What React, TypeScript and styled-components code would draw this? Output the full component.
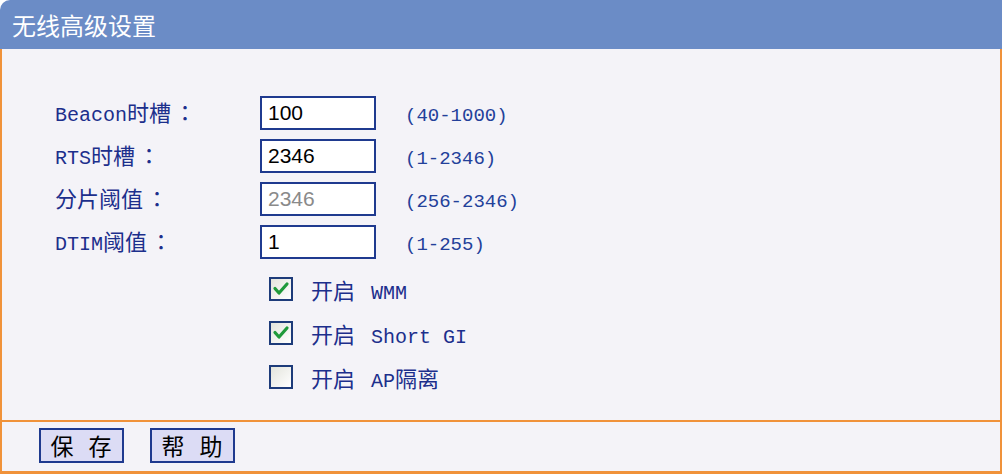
import { Fragment } from "react";
import styled, { createGlobalStyle } from "styled-components";

const GlobalStyle = createGlobalStyle`
  html, body {
    margin: 0;
    padding: 0;
    background: #ffffff;
  }
`;

const Page = styled.div`
  width: 1002px;
  height: 474px;
  display: flex;
  flex-direction: column;
  font-family: "Liberation Mono", "Noto Sans CJK SC", monospace;
`;

const Header = styled.div`
  height: 49px;
  background: #6b8cc6;
  border-top-left-radius: 10px;
  display: flex;
  align-items: center;
  padding-left: 12px;
  color: #ffffff;
  font-family: "Noto Sans CJK SC", sans-serif;
  font-size: 24px;
`;

const Content = styled.div`
  height: 371px;
  box-sizing: border-box;
  background: #f4f3f8;
  border-left: 2px solid #f0923a;
  border-right: 2px solid #f0923a;
  padding: 47px 0 0 53px;
  display: flex;
  flex-direction: column;
`;

const FieldGrid = styled.div`
  display: grid;
  grid-template-columns: 205px 145px auto;
  grid-auto-rows: 34px;
  row-gap: 9px;
  align-items: center;
`;

const Label = styled.div`
  color: #1c2f8c;
  font-size: 20px;
  line-height: 1;
  white-space: nowrap;
`;

const Cjk = styled.span`
  font-family: "Noto Sans CJK SC", sans-serif;
  font-size: 22px;
`;

const Colon = styled.span`
  font-family: "Noto Sans CJK TC", sans-serif;
  font-size: 22px;
  margin-left: 3px;
`;

const Input = styled.div<{ $disabled?: boolean }>`
  width: 116px;
  height: 34px;
  box-sizing: border-box;
  border: 2px solid #1f3a8f;
  background: #ffffff;
  color: ${(p) => (p.$disabled ? "#8a8a8a" : "#000000")};
  font-family: "Liberation Sans", Arial, sans-serif;
  font-size: 21px;
  display: flex;
  align-items: center;
  padding-left: 6px;
`;

const Range = styled.div`
  color: #23409a;
  font-size: 19px;
  padding-top: 6px;
`;

const Options = styled.div`
  margin-top: 8px;
  margin-left: 214px;
  display: flex;
  flex-direction: column;
`;

const OptionRow = styled.div`
  height: 44px;
  display: flex;
  align-items: center;
  gap: 18px;
  color: #1c2f8c;
  font-size: 20px;
  white-space: pre;

  & > span > ${Cjk}:first-child {
    margin-right: 4px;
  }
`;

const Box = styled.div`
  width: 24px;
  height: 24px;
  box-sizing: border-box;
  border: 2px solid #1d3b7a;
  background: linear-gradient(135deg, #e3e4dc, #ffffff);
  display: flex;
  align-items: center;
  justify-content: center;
`;

const Footer = styled.div`
  height: 54px;
  box-sizing: border-box;
  background: #f4f3f8;
  border: 2px solid #f0923a;
  border-bottom-width: 3px;
  padding: 6px 0 0 37px;
  display: flex;
  gap: 26px;
  align-items: flex-start;
`;

const Button = styled.button`
  width: 85px;
  height: 35px;
  box-sizing: border-box;
  border: 2px solid #1f3a8f;
  background: #dcdcf5;
  color: #000000;
  font-family: "Noto Sans CJK SC", sans-serif;
  font-size: 23px;
  line-height: 1;
  padding: 0 0 0 4px;
  letter-spacing: 5px;
  white-space: pre;
`;

const cjkPart = /([\u4e00-\u9fff]+|\uff1a)/;

function Mixed({ text }: { text: string }) {
  const parts = text.split(cjkPart).filter(Boolean);
  return (
    <>
      {parts.map((p, i) => {
        if (p === "\uff1a") return <Colon key={i}>{p}</Colon>;
        if (/[\u4e00-\u9fff]/.test(p)) return <Cjk key={i}>{p}</Cjk>;
        return <Fragment key={i}>{p}</Fragment>;
      })}
    </>
  );
}

function Checkbox({ checked }: { checked: boolean }) {
  return (
    <Box>
      {checked && (
        <svg width="18" height="18" viewBox="0 0 18 18">
          <path
            d="M3 8.5 L7 13 L15 4"
            fill="none"
            stroke="#1f9a3a"
            strokeWidth="3.2"
            strokeLinecap="round"
            strokeLinejoin="round"
          />
        </svg>
      )}
    </Box>
  );
}

const fields = [
  { label: "Beacon时槽：", value: "100", range: "(40-1000)" },
  { label: "RTS时槽：", value: "2346", range: "(1-2346)" },
  { label: "分片阈值：", value: "2346", range: "(256-2346)", disabled: true },
  { label: "DTIM阈值：", value: "1", range: "(1-255)" },
];

const options = [
  { text: "开启 WMM", checked: true },
  { text: "开启 Short GI", checked: true },
  { text: "开启 AP隔离", checked: false },
];

export default function App() {
  return (
    <Page>
      <GlobalStyle />
      <Header>无线高级设置</Header>
      <Content>
        <FieldGrid>
          {fields.map((f) => (
            <Fragment key={f.label}>
              <Label>
                <Mixed text={f.label} />
              </Label>
              <Input $disabled={f.disabled}>{f.value}</Input>
              <Range>{f.range}</Range>
            </Fragment>
          ))}
        </FieldGrid>
        <Options>
          {options.map((o) => (
            <OptionRow key={o.text}>
              <Checkbox checked={o.checked} />
              <span>
                <Mixed text={o.text} />
              </span>
            </OptionRow>
          ))}
        </Options>
      </Content>
      <Footer>
        <Button>保 存</Button>
        <Button>帮 助</Button>
      </Footer>
    </Page>
  );
}
